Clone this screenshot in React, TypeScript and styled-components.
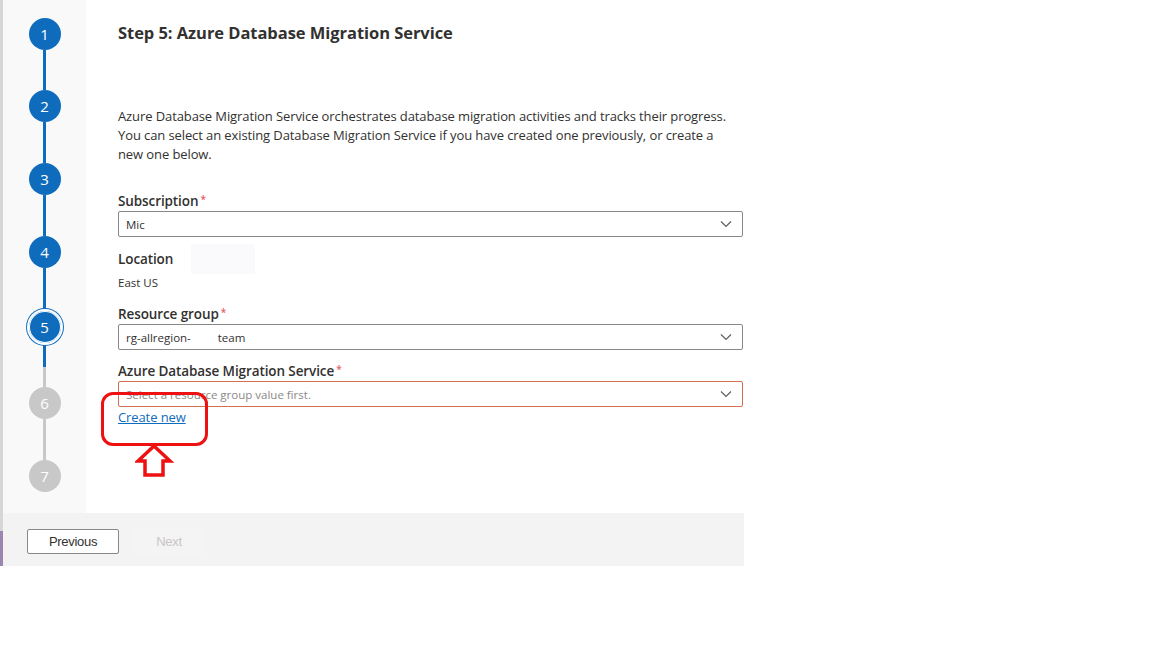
import React from "react";
import styled, { createGlobalStyle } from "styled-components";

const Global = createGlobalStyle`
  html, body { margin: 0; padding: 0; background: #ffffff; }
  body { font-family: "Open Sans", "Noto Sans", sans-serif; color: #323130; }
  * { box-sizing: border-box; }
`;

const Page = styled.div`
  width: 1152px;
  height: 648px;
  position: relative;
  background: #ffffff;
`;

const Panel = styled.div`
  display: flex;
  width: 744px;
  height: 566px;
`;

const EdgeStrip = styled.div`
  width: 3px;
  display: flex;
  flex-direction: column;
  background: #d6d6d6;
`;

const EdgeFill = styled.div`
  flex: 1;
`;

const EdgeAccent = styled.div`
  height: 35px;
  background: #9b86b0;
`;

const Wizard = styled.div`
  flex: 1;
  display: flex;
  flex-direction: column;
`;

const Body = styled.div`
  flex: 1;
  display: flex;
  position: relative;
`;

const Rail = styled.div`
  width: 83px;
  background: #f9f9f9;
  display: flex;
  flex-direction: column;
  align-items: center;
  padding-top: 18px;
`;

const StepItem = styled.div<{ $h: number }>`
  height: ${(p) => p.$h}px;
  display: flex;
  flex-direction: column;
  align-items: center;
`;

const Circle = styled.div<{ $state: "done" | "current" | "todo" }>`
  width: 32px;
  height: 32px;
  flex: none;
  border-radius: 50%;
  display: flex;
  align-items: center;
  justify-content: center;
  font-family: "Open Sans", sans-serif;
  font-size: 15px;
  color: #ffffff;
  background: ${(p) => (p.$state === "todo" ? "#c8c8c8" : "#0f6cbd")};
  ${(p) =>
    p.$state === "current"
      ? `box-shadow: 0 0 0 1px #ffffff inset, 0 0 0 2px #ffffff, 0 0 0 3px #0f6cbd;
         margin-top: 1px;`
      : ""}
`;

const Connector = styled.div<{ $split?: boolean; $color: string }>`
  flex: 1;
  width: 3px;
  background: ${(p) =>
    p.$split
      ? `linear-gradient(to bottom, #0f6cbd 0, #0f6cbd 22px, #c8c8c8 22px)`
      : p.$color};
  ${(p) => (p.$split ? "margin-top: 2px;" : "")}
`;

const Content = styled.div`
  flex: 1;
  background: #ffffff;
  padding: 21px 0 0 32px;
  display: flex;
  flex-direction: column;
`;

const Heading = styled.h2`
  margin: 0;
  font-family: "Open Sans", sans-serif;
  font-size: 16.5px;
  font-weight: 700;
  line-height: 24px;
  color: #323130;
  letter-spacing: -0.05px;
`;

const Description = styled.p`
  margin: 62px 0 0 0;
  font-family: "Open Sans", sans-serif;
  font-size: 13px;
  line-height: 19px;
  color: #323130;
  width: 625px;
  letter-spacing: -0.1px;
`;

const Field = styled.div<{ $mt: number }>`
  margin-top: ${(p) => p.$mt}px;
  display: flex;
  flex-direction: column;
  width: 625px;
`;

const Label = styled.div`
  font-family: "Open Sans", sans-serif;
  font-size: 13.5px;
  font-weight: 600;
  line-height: 19px;
  color: #323130;
  display: flex;
  align-items: flex-start;
  letter-spacing: -0.1px;
`;

const Required = styled.span`
  color: #e8596b;
  font-size: 10px;
  margin-left: 2px;
  line-height: 14px;
`;

const Select = styled.div<{ $error?: boolean }>`
  height: 26px;
  border: 1px solid ${(p) => (p.$error ? "#d2704f" : "#8a8886")};
  border-radius: 2px;
  background: #ffffff;
  display: flex;
  align-items: center;
  padding: 0 10px 0 7px;
  justify-content: space-between;
`;

const SelectText = styled.span<{ $placeholder?: boolean }>`
  font-family: "Open Sans", sans-serif;
  font-size: 11.5px;
  color: ${(p) => (p.$placeholder ? "#8a8886" : "#323130")};
  white-space: pre;
`;

const Value = styled.div`
  margin-top: 5px;
  font-family: "Open Sans", sans-serif;
  font-size: 11.5px;
  line-height: 16px;
  color: #323130;
`;

const LabelRow = styled.div`
  display: flex;
  align-items: center;
  gap: 18px;
  height: 22px;
`;

const Blur = styled.div`
  width: 64px;
  height: 30px;
  background: #fafafc;
`;

const Link = styled.a`
  margin-top: 1px;
  font-family: "Open Sans", sans-serif;
  font-size: 13px;
  line-height: 18px;
  color: #0f6cbd;
  text-decoration: underline;
  align-self: flex-start;
  letter-spacing: -0.1px;
`;

const Annotation = styled.div`
  position: absolute;
  left: 98px;
  top: 392px;
  width: 107px;
  height: 54px;
  border: 3.5px solid #ee1111;
  border-radius: 12px;
`;

const ArrowWrap = styled.svg`
  position: absolute;
  left: 132px;
  top: 443px;
`;

const Footer = styled.div`
  height: 53px;
  background: #f3f3f3;
  display: flex;
  align-items: flex-start;
  padding: 16px 0 0 24px;
  gap: 14px;
`;

const Button = styled.button<{ $disabled?: boolean }>`
  height: 25px;
  border-radius: 2px;
  font-family: "Liberation Sans", "Open Sans", sans-serif;
  font-size: 13px;
  letter-spacing: -0.3px;
  padding: 0;
  ${(p) =>
    p.$disabled
      ? `width: 72px; border: none; background: #f4f4f4; color: #c8c6c4;`
      : `width: 92px; border: 1px solid #8a8886; background: #ffffff; color: #323130;`}
`;

const Chevron = () => (
  <svg width="12" height="8" viewBox="0 0 12 8">
    <path d="M1 1.5 L6 6.5 L11 1.5" fill="none" stroke="#605e5c" strokeWidth="1.2" />
  </svg>
);

const steps: { n: number; state: "done" | "current" | "todo" }[] = [
  { n: 1, state: "done" },
  { n: 2, state: "done" },
  { n: 3, state: "done" },
  { n: 4, state: "done" },
  { n: 5, state: "current" },
  { n: 6, state: "todo" },
  { n: 7, state: "todo" },
];

const heights = [72, 73, 73, 74, 77, 73, 32];

export default function App() {
  return (
    <Page>
      <Global />
      <Panel>
        <EdgeStrip>
          <EdgeFill />
          <EdgeAccent />
        </EdgeStrip>
        <Wizard>
          <Body>
            <Rail>
              {steps.map((s, i) => (
                <StepItem key={s.n} $h={heights[i]}>
                  <Circle $state={s.state}>{s.n}</Circle>
                  {i < steps.length - 1 && (
                    <Connector
                      $split={s.state === "current"}
                      $color={s.state === "todo" ? "#c8c8c8" : "#0f6cbd"}
                    />
                  )}
                </StepItem>
              ))}
            </Rail>
            <Content>
              <Heading>Step 5: Azure Database Migration Service</Heading>
              <Description>
                Azure Database Migration Service orchestrates database migration activities and tracks their progress.
                <br />
                You can select an existing Database Migration Service if you have created one previously, or create a
                <br />
                new one below.
              </Description>
              <Field $mt={28}>
                <Label>
                  Subscription<Required>*</Required>
                </Label>
                <Select>
                  <SelectText>Mic</SelectText>
                  <Chevron />
                </Select>
              </Field>
              <Field $mt={11}>
                <LabelRow>
                  <Label>Location</Label>
                  <Blur />
                </LabelRow>
                <Value>East US</Value>
              </Field>
              <Field $mt={14}>
                <Label>
                  Resource group<Required>*</Required>
                </Label>
                <Select>
                  <SelectText>{"rg-allregion-         team"}</SelectText>
                  <Chevron />
                </Select>
              </Field>
              <Field $mt={12}>
                <Label>
                  Azure Database Migration Service<Required>*</Required>
                </Label>
                <Select $error>
                  <SelectText $placeholder>Select a resource group value first.</SelectText>
                  <Chevron />
                </Select>
                <Link href="#">Create new</Link>
              </Field>
            </Content>
            <Annotation />
            <ArrowWrap width="40" height="36" viewBox="0 0 40 36">
              <polygon
                points="19,3 35,18 28,18 28,32 10,32 10,18 3,18"
                fill="none"
                stroke="#ee1111"
                strokeWidth="3.5"
                strokeLinejoin="miter"
              />
            </ArrowWrap>
          </Body>
          <Footer>
            <Button>Previous</Button>
            <Button $disabled>Next</Button>
          </Footer>
        </Wizard>
      </Panel>
    </Page>
  );
}
